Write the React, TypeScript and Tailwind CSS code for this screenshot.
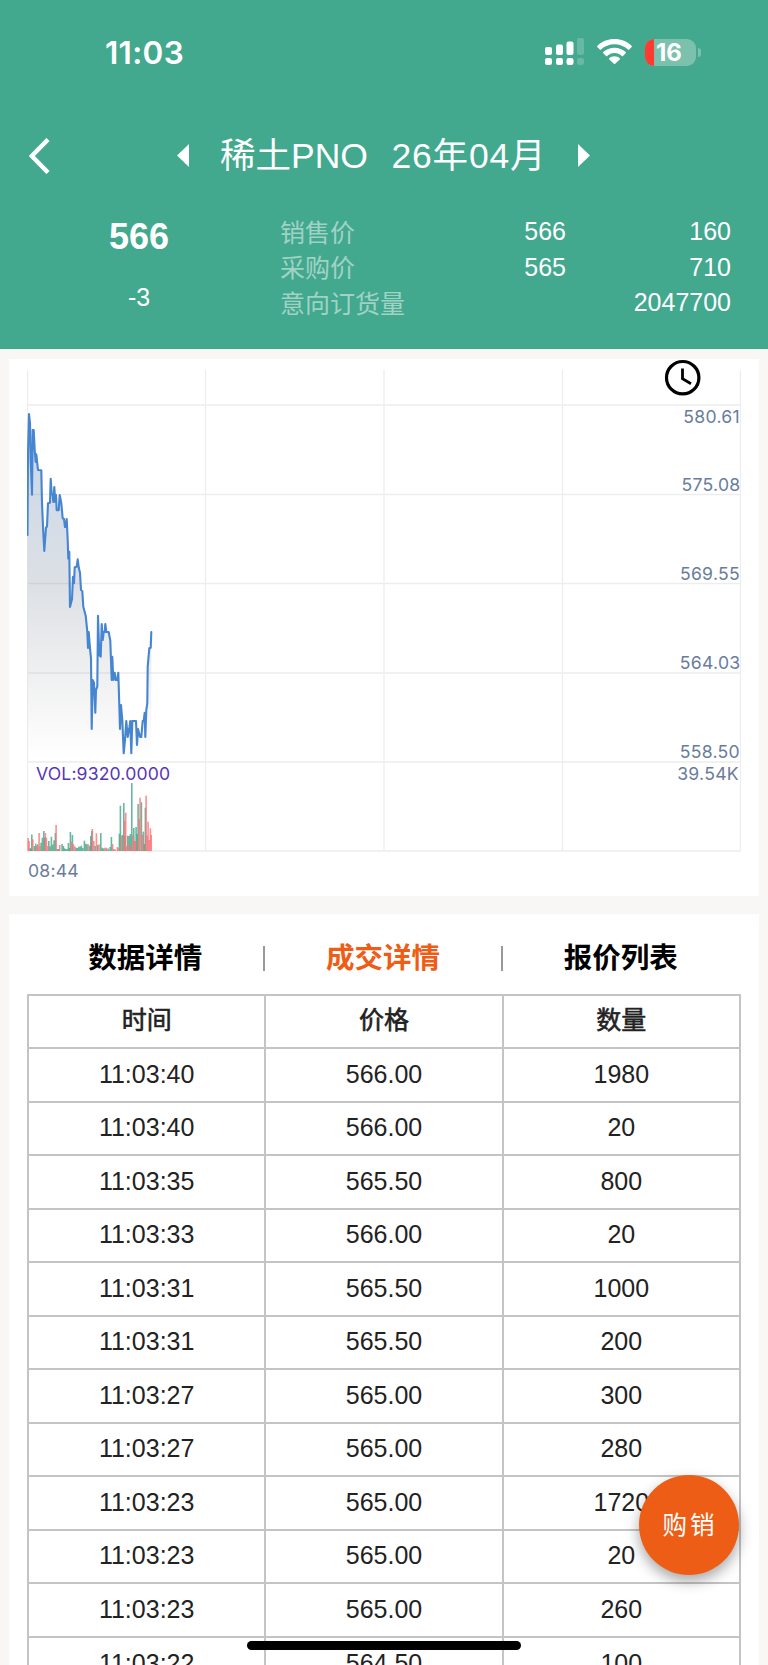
const sans = "font-['Liberation_Sans','Noto_Sans_CJK_SC',sans-serif]"

const quotes = [
  { name: '销售价', price: '566', amount: '160' },
  { name: '采购价', price: '565', amount: '710' },
  { name: '意向订货量', price: '', amount: '2047700' },
]

const trades = [
  ['11:03:40', '566.00', '1980'],
  ['11:03:40', '566.00', '20'],
  ['11:03:35', '565.50', '800'],
  ['11:03:33', '566.00', '20'],
  ['11:03:31', '565.50', '1000'],
  ['11:03:31', '565.50', '200'],
  ['11:03:27', '565.00', '300'],
  ['11:03:27', '565.00', '280'],
  ['11:03:23', '565.00', '1720'],
  ['11:03:23', '565.00', '20'],
  ['11:03:23', '565.00', '260'],
  ['11:03:22', '564.50', '100'],
]

const priceLine =
  '0.5,166 1,84 2,45 3,54 3.7,91 5,125.7 5.7,61 6.7,61 7.7,81 8.7,93 9.3,85.3 11,101 14.3,101.3 15,134 16.3,164 17.3,182 19,158.3 20,157.7 21,134.3 23,133.7 23.7,109.7 24.7,125.3 25.7,125.7 26.3,133 27.3,118 28.3,133 29,126 29.7,141.3 31.7,141.3 32.7,126 34.3,134.3 35.7,149.3 37,150 38,158 39,158 39.7,150 40.7,171 41.3,189.7 42.3,182.7 43,238 45,230 46,207.7 47,214.3 47.7,198.3 49.7,197.7 50.7,190.3 51.7,198.3 53,204 54,221 55.3,222 56.3,237.7 58.7,246.7 60.3,262.7 61,279 61.7,263 63,279.3 64,289.3 64.7,360 65.7,311 67,314 68.3,343.7 69,321 70.3,317.7 71,246.7 72.3,286 73.7,287.7 74.7,255 75.7,271 76.7,263 77.7,263 78.3,255 79.3,263 81.7,263 83.3,271.7 84.7,311 85.3,287.7 86.3,311 87.7,303.7 88.7,311 90.3,311 91.3,303.7 92.3,336 93,360 94,336 95.3,351 96.7,384.3 98,371 99.3,352 100.7,368 102.3,359.3 103.3,352 104.3,384.3 105.3,352 109,352 110,376 111,360 113,368 114.3,368 115.7,352 116.7,352 117.7,343.7 118.3,368 119.3,341 120.3,334.3 120.7,297.7 122.3,279.3 123.7,278.7 124.3,263'

// x, height
const upBars = [
  [3, 3], [3.7, 2], [4.7, 16.5], [7.3, 5], [8.7, 7.3], [10.7, 6.5], [14, 8.3], [15.3, 13.3], [16.7, 20], [17.7, 13.3], [21.7, 10], [23, 4.7], [24.3, 14.3], [25.7, 6.5], [27, 10.7], [28.3, 18], [30.3, 2], [31.5, 2],
  [35, 7], [36.3, 5], [37.3, 2.7], [38.5, 2], [40, 2], [41.3, 8], [42.3, 3], [43.3, 19], [45.3, 16], [49, 3.3], [50.3, 3], [51.7, 4.3], [53, 4.3], [54.3, 5.3], [55.7, 3], [57.3, 10.3], [58.7, 7.3], [60, 6.7], [62.7, 5], [63.7, 15], [64.7, 20],
  [68, 5], [70.7, 6], [73.7, 18], [75, 3.3], [76.3, 2.7], [79, 2], [81, 2.5], [83, 4], [84.3, 14], [88, 1.5], [92.3, 17.3], [93.3, 45.3], [95.3, 16], [96.7, 48], [98, 15], [100.7, 15.3], [102, 15], [103.3, 17], [104.7, 68], [106.7, 23], [109, 24], [110, 17],
  [111, 47], [114.3, 48.7], [116.3, 19.3], [117.3, 7], [118.3, 43.3],
]
const downBars = [
  [1, 13], [2, 10], [5.7, 11.7], [9.7, 5], [12, 18], [13, 4.7], [18.3, 18], [19.3, 13.3], [20.7, 5], [29, 26], [32.7, 6], [44.3, 9.3], [46.3, 6.7], [47.7, 4.7], [61.3, 6.7], [65.3, 22], [66.7, 10], [69.3, 17.7], [72, 6.7], [77.7, 3.3], [79.3, 3.3],
  [85.5, 7], [86.7, 2], [90.3, 4], [91.5, 3], [94.5, 15], [97.5, 30], [98.6, 38.3], [99.7, 4.7], [102.5, 6.7], [103.7, 4], [105.7, 16], [107.7, 10], [108.5, 10], [112.1, 32], [113, 53.3], [115.3, 16], [119, 55.3], [120.1, 15], [121, 29.3], [122.1, 11], [123.3, 22.7], [124.1, 16],
]

export default function App() {
  return (
    <div className={`relative h-[1665px] w-[768px] overflow-hidden bg-[#f8f7f5] ${sans}`}>
      {/* Header */}
      <header className="h-[349px] bg-[#42a88e] text-white">
        <StatusBar />
        <div className="flex h-[103px] items-center pl-[29px]">
          <svg className="h-9 w-[22px]" viewBox="0 0 22 36" fill="none" stroke="white" strokeWidth="4.5">
            <path d="M19 1.5 2.8 18 19 34.5" />
          </svg>
          <svg className="ml-[126px] h-[23px] w-3" viewBox="0 0 12 23" fill="white"><path d="M12 0v23L0 11.5z" /></svg>
          <h1 className="ml-[31px] w-[147px] pt-0.5 text-[35.5px] leading-none whitespace-nowrap">稀土PNO</h1>
          <span className="ml-[24.5px] w-[155px] pt-0.5 text-[35.5px] leading-none tracking-[0.8px] whitespace-nowrap">26年04月</span>
          <svg className="ml-[31.5px] h-[23px] w-3" viewBox="0 0 12 23" fill="white"><path d="M0 0v23l12-11.5z" /></svg>
        </div>
        <div className="flex text-[25px]">
          <div className="flex w-[278px] flex-col items-center pt-2">
            <strong className="text-[36px] leading-[44px]">566</strong>
            <span className="mt-[22px] leading-8">-3</span>
          </div>
          <div className="flex-1 pt-[7px] pr-[37px] pl-[2px]">
            {quotes.map((q) => (
              <div key={q.name} className="flex h-[35.7px] items-center">
                <span className="w-[150px] pt-[3px] whitespace-nowrap text-white/50">{q.name}</span>
                <span className="w-[136px] text-right">{q.price}</span>
                <span className="flex-1 text-right">{q.amount}</span>
              </div>
            ))}
          </div>
        </div>
      </header>

      {/* Chart */}
      <section className="mx-[9px] mt-[10px] h-[537px] bg-white px-[18px]">
        <Chart />
      </section>

      {/* Trades */}
      <section className="mx-[9px] mt-[18px] bg-white px-[18px] pb-10">
        <nav className="flex h-20 items-center pt-[8px] pr-[2px] text-center text-[28.5px] font-bold">
          <span className="flex-1">数据详情</span>
          <i className="h-[25px] w-[1.5px] bg-[#999]" />
          <span className="flex-1 text-[#ee5d15]">成交详情</span>
          <i className="h-[25px] w-[1.5px] bg-[#999]" />
          <span className="flex-1">报价列表</span>
        </nav>
        <div className="border-t-2 border-l-2 border-[#c4c4c4] text-[25px] text-[#222]">
          <div className="grid h-[53px] grid-cols-3 [-webkit-text-stroke:0.6px_#222]">
            <Cell text="时间" />
            <Cell text="价格" />
            <Cell text="数量" />
          </div>
          {trades.map((row, i) => (
            <div key={i} className="grid h-[53.55px] grid-cols-3">
              {row.map((text, j) => <Cell key={j} text={text} />)}
            </div>
          ))}
        </div>
      </section>

      <button className="absolute top-[1475px] left-[639px] size-[100px] rounded-full bg-[#ee5d15] pt-[2px] pl-[2px] text-[24.5px] tracking-[3px] text-white shadow-[0_6px_14px_rgba(0,0,0,0.35)]">购销</button>
      <div className="absolute top-[1641px] left-[247px] h-[9px] w-[274px] rounded-full bg-black" />
    </div>
  )
}

function Cell(props: { text: string }) {
  return <div className="flex items-center justify-center border-r-2 border-b-2 border-[#c4c4c4] pb-px">{props.text}</div>
}

function StatusBar() {
  return (
    <div className="flex h-[104px] items-center pl-[105px] font-['Inter',sans-serif]">
      <span className="w-[440px] pt-0.5 text-[31.5px] font-semibold tracking-[0.3px]">11:03</span>
      {/* signal */}
      <svg className="h-7 w-[39px]" viewBox="0 0 39 28" fill="white">
        <rect x="0" y="9" width="7" height="8" rx="2" />
        <rect x="11" y="6.5" width="7" height="10.5" rx="2" />
        <rect x="21.5" y="3.5" width="7" height="13.5" rx="2" />
        <rect x="32" y="0" width="7" height="17" rx="2" opacity=".2" />
        <rect x="0" y="20" width="7" height="7" rx="2.2" />
        <rect x="11" y="20" width="7" height="7" rx="2.2" />
        <rect x="21.5" y="20" width="7" height="7" rx="2.2" />
        <rect x="32" y="20" width="7" height="7" rx="2.2" opacity=".2" />
      </svg>
      {/* wifi */}
      <svg className="ml-[13px] h-[26px] w-[35px]" viewBox="0 0 35 26" fill="white">
        <path d="M17.5 0C24.2 0 30.4 2.6 34.7 6.9q.6.6 0 1.2L32.2 10.6q-.6.5-1.2 0C27.4 7.2 22.7 5.3 17.5 5.3S7.6 7.2 4 10.6q-.6.5-1.2 0L.3 8.1q-.6-.6 0-1.2C4.6 2.6 10.8 0 17.5 0z" />
        <path d="M17.5 8.7c4.3 0 8.3 1.7 11.2 4.4q.6.6 0 1.2l-2.7 2.6q-.6.5-1.2 0c-2-1.8-4.5-2.9-7.3-2.9s-5.3 1.1-7.3 2.9q-.6.5-1.2 0l-2.7-2.6q-.6-.6 0-1.2c2.9-2.7 6.9-4.4 11.2-4.4z" />
        <path d="M17.5 17.3c2 0 3.8.7 5.2 1.9q.6.6 0 1.2l-4.5 4.4q-.7.6-1.4 0l-4.5-4.4q-.6-.6 0-1.2c1.4-1.2 3.2-1.9 5.2-1.9z" />
      </svg>
      {/* battery */}
      <div className="ml-[13px] flex h-[27px] w-[51px] items-center overflow-hidden rounded-[9px] bg-[#7cc1ae]">
        <div className="h-full w-[8.5px] bg-[#ff3b30]" />
        <span className="ml-[2.5px] pt-px text-[24px] leading-none font-bold">16</span>
      </div>
      <div className="ml-[1.5px] h-[9px] w-[3px] rounded-r-full bg-[#7cc1ae]" />
    </div>
  )
}

function Chart() {
  return (
    <svg className="block h-[537px] w-[714px] font-['Inter',sans-serif]" viewBox="0 -10 714 537" fontSize="17.6">
      <defs>
        <linearGradient id="area" x1="0" y1="45" x2="0" y2="390" gradientUnits="userSpaceOnUse">
          <stop offset="0" stopColor="#5c8cc8" stopOpacity=".36" />
          <stop offset=".5" stopColor="#7c8a9c" stopOpacity=".26" />
          <stop offset="1" stopColor="#888" stopOpacity="0" />
        </linearGradient>
      </defs>
      <g stroke="#ededed" strokeWidth="1.3">
        {[0.5, 178.5, 357, 535.5, 713.5].map((x) => <path key={x} d={`M${x} 1V482`} />)}
        {[36, 125.5, 214.5, 304, 393, 482].map((y) => <path key={y} d={`M0 ${y}H714`} />)}
      </g>
      <polygon points={`0.5,390 ${priceLine} 124.3,390`} fill="url(#area)" />
      <polyline points={priceLine} fill="none" stroke="#4685d0" strokeWidth="2.1" strokeLinejoin="round" strokeLinecap="round" />
      <g fill="#43a68b" fillOpacity=".8">
        {upBars.map(([x, h]) => <rect key={x} x={x - 0.7} y={482 - h} width="1.6" height={h} />)}
      </g>
      <g fill="#fb7275" fillOpacity=".8">
        {downBars.map(([x, h]) => <rect key={x} x={x - 0.7} y={482 - h} width="1.6" height={h} />)}
      </g>
      <g fill="#697d9b" textAnchor="end" letterSpacing=".3">
        <text x="713" y="54">580.61</text>
        <text x="713.5" y="122">575.08</text>
        <text x="713" y="211">569.55</text>
        <text x="713.5" y="300">564.03</text>
        <text x="713" y="389">558.50</text>
        <text x="712" y="411">39.54K</text>
      </g>
      <text x="9" y="411" fill="#5736b4" letterSpacing=".15">VOL:9320.0000</text>
      <text x="1" y="507.5" fill="#697d9b" letterSpacing=".2">08:44</text>
      <g fill="none" stroke="black" strokeWidth="3.2">
        <circle cx="655.7" cy="8.7" r="16.2" />
        <path d="M655.5-.5V9.7L664 14.8" strokeWidth="2.8" />
      </g>
    </svg>
  )
}
